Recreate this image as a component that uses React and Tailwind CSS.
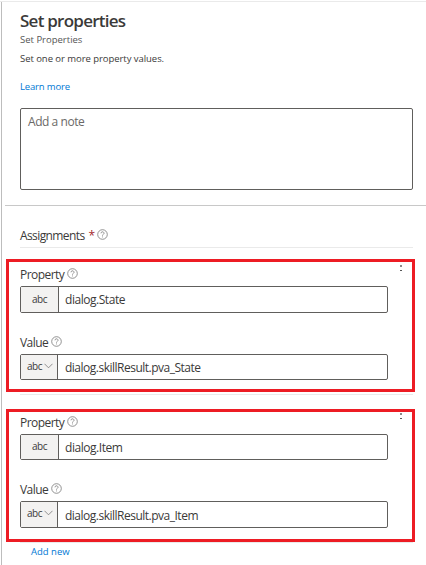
import React from "react";

function HelpIcon() {
  return (
    <svg width="11" height="11" viewBox="0 0 11 11" fill="none" stroke="#777777" strokeWidth="0.8" className="shrink-0">
      <circle cx="5.5" cy="5.5" r="4.8" />
      <path d="M4 4.3a1.5 1.4 0 1 1 2.3 1.1c-.6.4-.8.6-.8 1.2" />
      <path d="M5.5 7.5v.9" />
    </svg>
  );
}

function Chevron() {
  return (
    <svg width="9" height="6" viewBox="0 0 9 6" fill="none" stroke="#777777" strokeWidth="0.8">
      <path d="M.5.8 4.5 4.8 8.5.8" />
    </svg>
  );
}

function More() {
  return (
    <div className="mr-[9px] flex h-[6px] w-[5px] flex-col items-center justify-between">
      <span className="h-[2px] w-[2px] bg-[#8a8a8a]" />
      <span className="h-px w-[2px] bg-[#555555]" />
    </div>
  );
}

function Label({ text, className }) {
  return (
    <div className={`flex h-4 items-start gap-[3px] text-[12px] leading-4 ${className}`}>
      <span className="pt-px tracking-[-0.55px]">{text}</span>
      <span className="pt-[2px]"><HelpIcon /></span>
    </div>
  );
}

function Field({ value, select, className, textClass }) {
  return (
    <div className={`flex w-[368px] rounded-[2px] border border-[#605e5c] ${className}`}>
      <div
        className={`flex shrink-0 border-r border-[#605e5c] bg-[#f3f2f1] text-[10px] ${
          select ? "w-[37px] items-center gap-[2px] pb-[3px] pl-[6px]" : "w-[38px] items-center justify-center pb-[2px]"
        }`}
      >
        <span className="leading-[14px] tracking-[-0.5px]">abc</span>
        {select && <Chevron />}
      </div>
      <div className={`flex items-center text-[12px] leading-4 ${select ? "pl-[7px]" : "pl-[6px]"} ${textClass}`}>{value}</div>
    </div>
  );
}

export default function App() {
  return (
    <div className="h-[565px] w-[426px] overflow-hidden bg-white pt-px font-['Open_Sans',sans-serif] text-[#3b3a39]">
      <div className="h-px bg-[#eaeaea]" />
      <div className="ml-px h-[563px] border-l border-[#bdbdbd]">
        <header className="flex h-[203px] flex-col pl-[18px]">
          <h1 className="mt-[7px] h-6 text-[17px] leading-6 font-semibold tracking-[-0.75px] whitespace-nowrap">Set properties</h1>
          <p className="h-3 text-[9.5px] leading-[14px] text-[#555555]">Set Properties</p>
          <p className="mt-[7px] h-3 text-[9.5px] leading-[14px] tracking-[-0.05px]">Set one or more property values.</p>
          <a className="mt-4 h-3 text-[9.5px] leading-[14px] tracking-[-0.15px] text-[#0078d4]">Learn more</a>
          <div className="mt-4 h-[82px] w-[393px] rounded-[2px] border border-[#605e5c] pt-[5px] pl-[7px] text-[12px] leading-4 tracking-[-0.45px] text-[#6b6967]">
            Add a note
          </div>
        </header>
        <div className="ml-[3px] h-px bg-[#c8c8c8]" />
        <div className="flex h-[41px] items-end pb-[3px] pl-[18px]">
          <div className="flex h-4 items-start text-[12px] leading-4">
            <span className="tracking-[-0.6px]">Assignments</span>
            <span className="ml-[4px] text-[#a4262c]">*</span>
            <span className="ml-[2px] pt-px"><HelpIcon /></span>
          </div>
        </div>
        <div className="ml-[18px] h-px w-[393px] bg-[#eaeaea]" />

        <section className="mt-[11px] ml-[4px] h-[133px] w-[409px] border-[3px] border-[#ed1c24] pl-[11px]">
          <div className="flex h-6 justify-between">
            <Label text="Property" className="mt-[4px]" />
            <div className="pt-[3px]"><More /></div>
          </div>
          <Field value="dialog.State" className="h-[27px]" textClass="pt-px tracking-[-0.46px]" />
          <Label text="Value" className="mt-[21px]" />
          <Field value="dialog.skillResult.pva_State" select className="mt-[4px] h-[26px]" textClass="pt-[2px] tracking-[-0.5px]" />
        </section>

        <div className="mt-[2px] ml-[18px] h-px w-[393px] bg-[#eaeaea]" />

        <section className="mt-[14px] ml-[4px] h-[133px] w-[409px] border-[3px] border-[#ed1c24] pl-[11px]">
          <div className="flex h-[22px] justify-between">
            <Label text="Property" className="mt-[2px]" />
            <div className="pt-px"><More /></div>
          </div>
          <Field value="dialog.Item" className="h-[26px]" textClass="pt-[2px] tracking-[-0.46px]" />
          <Label text="Value" className="mt-[21px]" />
          <Field value="dialog.skillResult.pva_Item" select className="mt-[4px] h-[27px]" textClass="pt-[3px] tracking-[-0.5px]" />
        </section>

        <div className="ml-[18px] h-px w-[393px] bg-[#eaeaea]" />
        <a className="mt-[3px] ml-[29px] block h-3 text-[9.5px] leading-3 text-[#0078d4]">Add new</a>
      </div>
    </div>
  );
}
